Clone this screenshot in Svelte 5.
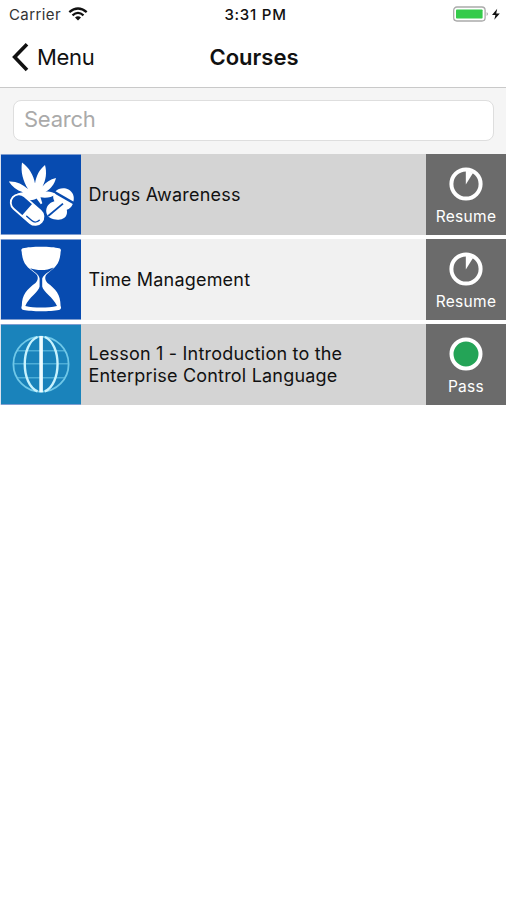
<script lang="ts">
  type Course = {
    title: string;
    icon: "drugs" | "time" | "globe";
    status: "Resume" | "Pass";
  };

  let search = "";

  const courses: Course[] = [
    { title: "Drugs Awareness", icon: "drugs", status: "Resume" },
    { title: "Time Management", icon: "time", status: "Resume" },
    {
      title: "Lesson 1 - Introduction to the Enterprise Control Language",
      icon: "globe",
      status: "Pass",
    },
  ];
</script>

<div class="screen">
  <header>
    <div class="status-bar">
      <div class="carrier">
        <span>Carrier</span>
        <svg class="wifi" viewBox="0 0 20 14" width="20" height="14">
          <path d="M1.3 5.1 Q10 -2.2 18.7 5.1" />
          <path d="M4.5 8.3 Q10 3.5 15.5 8.3" />
          <path class="dot" d="M7 10.5 Q10 8.2 13 10.5 L10 13.6 Z" />
        </svg>
      </div>
      <div class="clock">3:31 PM</div>
      <div class="power">
        <svg viewBox="0 0 50 18" width="50" height="18">
          <rect x="2.7" y="2" width="31.4" height="14" rx="3.2" fill="#fff" stroke="#aaa" stroke-width="1.3" />
          <rect x="5" y="4.4" width="26.6" height="9.2" rx="0.8" fill="#35cb4b" />
          <path d="M35.6 7 Q38.4 9 35.6 11 Z" fill="#aaa" />
          <path d="M46.2 3.8 L41 9.9 L44.4 9.9 L43.3 14.8 L48.8 8.4 L45.2 8.4 Z" fill="#111" />
        </svg>
      </div>
    </div>
    <nav>
      <button class="back">
        <svg viewBox="0 0 18 30" width="18" height="30">
          <path d="M16 2.2 L3.6 15.1 L16 28" />
        </svg>
        <span>Menu</span>
      </button>
      <h1>Courses</h1>
    </nav>
  </header>

  <div class="search">
    <input type="text" placeholder="Search" bind:value={search} />
  </div>

  <ul class="courses">
    {#each courses as course}
      <li class="course">
        <div class="tile {course.icon}">
          <svg viewBox="0 4 81 81" width="81" height="81">
            {#if course.icon === "drugs"}
              <g fill="#fff">
                <path d="M28 39 C23 31 20.5 22 22 12.5 C29 17.5 33.5 25 35 33.5 C36.2 26 39 20 45 15 C47 22.5 46 30 42.5 36.5 C46 32 50 29.5 56 28 C54.5 34.5 50.5 39 45.5 41.8 C49 41 52.5 42 56 44.2 C51.5 47.4 46 48.4 40.5 47.3 L42.3 53.2 L40.8 54.2 L36.5 48.5 C33 50.5 29 50.8 26 48.8 C22 46.8 17 47.2 12.5 48 C15.5 44.2 19 42.5 23 42.2 C16.5 40.2 12 36.5 8.8 31.5 C16 31 22.5 34 28 39 Z" />
                <path d="M55.5 41.3 C58.5 37.8 64.5 37.2 68.5 39.5 C72.8 42 74.7 46.6 73.4 51.4 Z" />
                <path d="M54 43.2 L72.8 54 C71.3 57.4 69.6 58.8 66.8 59.7 C68 65.5 64.5 69 60 69.5 C55.5 70.5 47 68.5 46.3 62.3 C45.7 57 49 52.5 54.4 51.2 C52.8 48.3 52.8 45.5 54 43.2 Z" />
              </g>
              <path d="M48.2 66 L63 53.6" stroke="#074bb0" stroke-width="1.8" />
              <g transform="rotate(41 27.5 60)">
                <rect x="8" y="51.8" width="38" height="16.4" rx="8.2" fill="#074bb0" stroke="#fff" stroke-width="1.8" />
                <path d="M27 51.8 H37.8 A8.2 8.2 0 0 1 37.8 68.2 H27 Z" fill="#fff" />
                <path d="M31 65.2 H37.6 C41 65.2 42.9 62.6 43.1 60" fill="none" stroke="#074bb0" stroke-width="1.4" stroke-linecap="round" />
              </g>
            {:else if course.icon === "time"}
              <path d="M23 13.2 C30 11.1 52 11.1 59 13.2 C61 13.8 61.3 15 60.6 16.7 C60 29 55.5 32 47.5 38.5 C44.5 41 44.5 45 47.5 48 C56 54.5 60.4 59 60.6 71 C61.6 73.2 60.7 74.5 58.7 75 C51 76.7 31 76.7 23.7 75 C21.7 74.5 20.8 73.2 21.8 71 C22 59 27 54.5 35.5 48 C38.5 45 38.5 41 35.5 38.5 C27 32 22.6 29 21.7 16.7 C21 15 21.3 13.8 23 13.2 Z" fill="#fff" />
              <path d="M30.3 33.2 C37 35.8 47 35.7 53.5 32.5 C51 36.5 44 38.4 42.2 43.5 V51.5 C43.2 57 53 62 57 71 C48 73 34 73 25.3 71 C29 62 38.8 57 39.6 51.5 V43.5 C38.8 38.5 33 36.5 30.3 33.2 Z" fill="#074bb0" />
            {:else}
              <g fill="none" stroke="#70c8e8" stroke-width="1.4">
                <circle cx="41" cy="44.2" r="27.6" stroke-width="1.8" />
                <path d="M17.5 30.8 H64.5 M13.4 43.8 H68.6 M17.5 57.8 H64.5" opacity=".62" />
              </g>
              <g fill="none" stroke="#c8f2fd" stroke-width="2.4">
                <path d="M37.5 17 C20.5 24 20.5 64 37.5 71.4" />
                <path d="M44.8 17 C61.8 24 61.8 64 44.8 71.4" />
              </g>
              <path d="M41.1 16 V72.3" stroke="#effcff" stroke-width="3.6" />
            {/if}
          </svg>
        </div>
        <div class="title">{course.title}</div>
        <div class="action">
          <svg viewBox="0 0 36 36" width="36" height="36">
            {#if course.status === "Resume"}
              <circle cx="18" cy="18" r="14.6" fill="none" stroke="#fff" stroke-width="4" />
              <path d="M17.8 4 V18.4 L25 7 Z" fill="#fff" />
            {:else}
              <circle cx="18" cy="18" r="14.5" fill="#24a457" stroke="#fff" stroke-width="4" />
            {/if}
          </svg>
          <span>{course.status}</span>
        </div>
      </li>
    {/each}
  </ul>
</div>

<style>
  :global(body) {
    margin: 0;
    background: #fff;
  }

  .screen {
    min-height: 900px;
    font-family: Inter, "Liberation Sans", sans-serif;
    color: #111;
  }

  header {
    box-sizing: border-box;
    height: 88px;
    border-bottom: 1px solid #c9c9c9;
  }

  .status-bar {
    display: grid;
    grid-template-columns: 1fr auto 1fr;
    align-items: center;
    height: 28px;
    font-size: 15px;
  }

  .carrier {
    display: flex;
    align-items: center;
    gap: 7px;
    padding-left: 9px;
    color: #333;
    letter-spacing: 0.4px;
  }

  .wifi path {
    fill: none;
    stroke: #111;
    stroke-width: 2.3;
  }

  .wifi .dot {
    fill: #111;
    stroke: none;
  }

  .clock {
    padding-left: 5px;
    font-weight: 500;
    letter-spacing: 0.75px;
  }

  .power {
    display: flex;
    justify-content: flex-end;
    padding-right: 5px;
  }

  nav {
    display: grid;
    grid-template-columns: 1fr auto 1fr;
    align-items: center;
    height: 58px;
  }

  .back {
    display: flex;
    align-items: center;
    gap: 8px;
    padding: 0 0 0 11px;
    border: 0;
    background: none;
    font: inherit;
    font-size: 22px;
    letter-spacing: -0.3px;
    color: #111;
    cursor: pointer;
  }

  .back path {
    fill: none;
    stroke: #111;
    stroke-width: 3.6;
  }

  h1 {
    margin: 0;
    padding-left: 2px;
    font-size: 22px;
    font-weight: 600;
  }

  .search {
    box-sizing: border-box;
    height: 66px;
    padding: 12px 12px 13px 13px;
    background: #f5f5f5;
  }

  input {
    box-sizing: border-box;
    width: 100%;
    height: 41px;
    padding: 0 10px 3px;
    border: 1px solid #dedede;
    border-radius: 8px;
    background: #fff;
    font: inherit;
    font-size: 22px;
    letter-spacing: -0.25px;
    outline: none;
  }

  input::placeholder {
    color: #aaa;
  }

  .courses {
    display: flex;
    flex-direction: column;
    gap: 4px;
    margin: 0;
    padding: 0;
    list-style: none;
  }

  .course {
    display: flex;
    height: 81px;
    background: #d4d4d4;
  }

  .course:nth-child(even) {
    background: #f1f1f1;
  }

  .tile {
    box-sizing: border-box;
    width: 81px;
    flex: none;
    background: #074bb0;
    box-shadow: inset 1px 0 #dce2ee, inset 0 1px #7f9dd0, inset 0 -1px #7f9dd0;
  }

  .tile.globe {
    background: #1a83bb;
  }

  .tile svg {
    display: block;
  }

  .title {
    flex: 1;
    align-self: center;
    padding: 0 60px 0 7.5px;
    font-size: 18px;
    line-height: 22px;
    letter-spacing: 0.2px;
  }

  .action {
    display: flex;
    flex-direction: column;
    align-items: center;
    box-sizing: border-box;
    width: 80px;
    padding-top: 12px;
    background: #6b6b6b;
    color: #fff;
    font-size: 15.5px;
    line-height: 20px;
    letter-spacing: 0.3px;
  }

  .action span {
    margin-top: 5px;
  }
</style>
